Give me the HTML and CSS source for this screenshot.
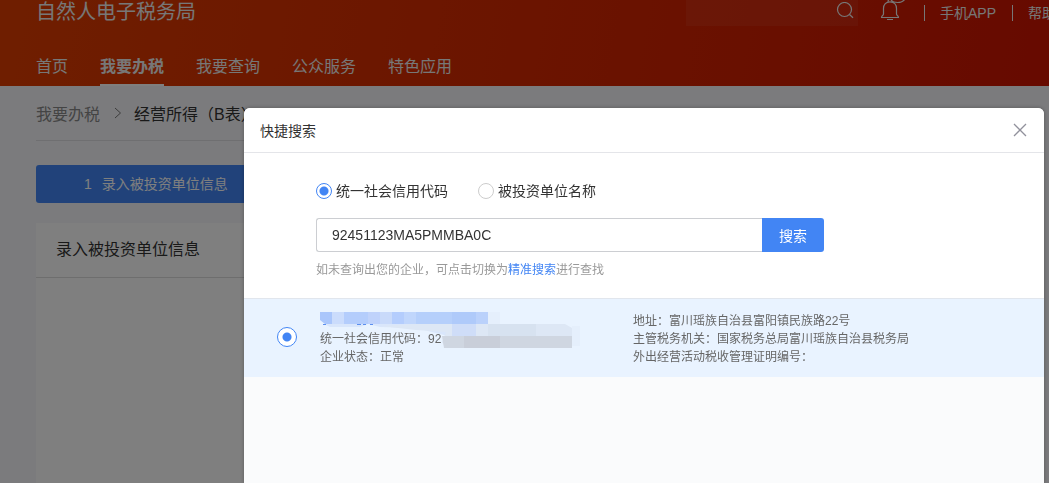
FILE: index.html
```html
<!DOCTYPE html>
<html lang="zh-CN">
<head>
<meta charset="utf-8">
<title>自然人电子税务局</title>
<link rel="stylesheet" href="styles.css">
</head>
<body>
<div class="page">
  <header class="header">
    <div class="topbar">
      <h1 class="brand">自然人电子税务局</h1>
      <div class="tools">
        <div class="site-search">
          <button class="icon-button" type="button" aria-label="搜索">
            <svg width="18" height="18" viewBox="0 0 18 18" fill="none" stroke="currentColor" stroke-width="1.2"><circle cx="8.500" cy="7.500" r="7"/><path d="M13.500 12.500L17 15.800"/></svg>
          </button>
        </div>
        <button class="icon-button bell" type="button" aria-label="消息">
          <svg width="26" height="22" viewBox="0 0 26 22" fill="none" stroke="currentColor" stroke-width="1.200"><path d="M1 17.500H19M3.500 14V8.500C3.500 4.500 6 1.800 10 1.800S16.500 4.500 16.500 8.500V14C16.500 15.500 18.500 15.500 18.500 17.500M3.500 14C3.500 15.500 1.500 15.500 1.500 17.500M7 19.500H13M8 1.500C8 .5 8.500 0 9 -.5M11 0C13 3 22 4 25 -1"/></svg>
        </button>
        <a class="tool-link" href="#">手机APP</a>
        <a class="tool-link" href="#">帮助</a>
      </div>
    </div>
    <nav class="nav">
      <a class="nav-item" href="#">首页</a>
      <a class="nav-item nav-active" href="#">我要办税</a>
      <a class="nav-item" href="#">我要查询</a>
      <a class="nav-item" href="#">公众服务</a>
      <a class="nav-item" href="#">特色应用</a>
    </nav>
  </header>
  <main class="content">
    <div class="crumbs">
      <a class="crumb-link" href="#">我要办税</a>
      <svg width="8" height="12" viewBox="0 0 8 12" fill="none" stroke="currentColor"><path d="M1 1L6.500 6L1 11"/></svg>
      <span class="crumb-current">经营所得（B表）</span>
    </div>
    <div class="steps"><span>1</span><span>录入被投资单位信息</span></div>
    <section class="panel">
      <h2 class="panel-title">录入被投资单位信息</h2>
    </section>
  </main>
</div>
<div class="overlay">
  <section class="dialog" role="dialog" aria-labelledby="dialog-title">
    <div class="dialog-head">
      <h2 class="dialog-title" id="dialog-title">快捷搜索</h2>
      <button class="icon-button close" type="button" aria-label="关闭">
        <svg width="14" height="14" viewBox="0 0 14 14" fill="none" stroke="currentColor" stroke-width="1.300"><path d="M1 1L13 13M13 1L1 13"/></svg>
      </button>
    </div>
    <form class="search-form">
      <div class="options">
        <label class="option"><input class="radio" type="radio" name="kind" checked>统一社会信用代码</label>
        <label class="option"><input class="radio" type="radio" name="kind">被投资单位名称</label>
      </div>
      <div class="search-row">
        <input class="search-input" type="text" aria-label="统一社会信用代码" value="92451123MA5PMMBA0C">
        <button class="search-button" type="button">搜索</button>
      </div>
      <p class="hint">如未查询出您的企业，可点击切换为<a class="hint-link" href="#">精准搜索</a>进行查找</p>
    </form>
    <label class="result">
      <input class="radio result-radio" type="radio" name="company" checked>
      <span class="result-main">
        <svg class="mosaic" width="260" height="42" viewBox="0 0 260 42">
          <path fill="#d9e6fb" d="M4 12H168V24H128L96 16L60 15L48 12L40 15H10Z"/>
          <path fill="#dde7f5" d="M60 14L96 12H245L252 16V36H126L122 30L126 20L96 18Z"/>
          <path fill="#aac6fb" d="M0 0H12V12H5L0 8Z"/><path fill="#cbdcfc" d="M12 0H24V12H12Z"/>
          <path fill="#b4cdfc" d="M24 0H48V12H24Z"/><path fill="#bfd2fb" d="M48 0H60V12H48Z"/>
          <path fill="#c9dafa" d="M60 0H72V12H60Z"/><path fill="#b4cdfd" d="M72 0H84V12H72Z"/>
          <path fill="#c0d6fc" d="M84 0H96V12H84Z"/><path fill="#b5cffb" d="M96 0H132V12H96Z"/>
          <path fill="#afcafa" d="M132 0H156V12H132Z"/><path fill="#bad1fb" d="M156 0H168V12H156Z"/>
          <path fill="#e5effc" d="M168 0H180V12H168ZM252 14H260V34H252Z"/>
          <path fill="#cfddf8" d="M132 12H156V24H132Z"/><path fill="#d7e2f0" d="M168 12H216V24H168Z"/>
          <path fill="#cfd6e1" d="M122 24H252V36H124Z"/><path fill="#c9ced9" d="M144 24H180V36H144Z"/>
          <path fill="#5b8ff0" d="M3 12H6V13H3ZM37 12H41V13H37ZM43 12H46V13H43ZM50 12H53V13H50Z"/>
        </svg>
        <span class="line">统一社会信用代码：92</span>
        <span class="line">企业状态：正常</span>
      </span>
      <span class="result-side">
        <span class="line">地址：富川瑶族自治县富阳镇民族路22号</span>
        <span class="line">主管税务机关：国家税务总局富川瑶族自治县税务局</span>
        <span class="line">外出经营活动税收管理证明编号：</span>
      </span>
    </label>
  </section>
</div>
</body>
</html>
```
FILE: styles.css
```css
* { box-sizing: border-box; }
body {
  margin: 0;
  font-family: "Liberation Sans", "Noto Sans CJK SC", sans-serif;
  font-size: 14px;
  color: #333;
  background: #f7f7fa;
}
h1, h2, p { margin: 0; font-weight: 400; }
a { color: inherit; text-decoration: none; }
button, input { font: inherit; margin: 0; }
.page { height: 100vh; overflow: hidden; display: flex; flex-direction: column; }
.header {
  flex: none;
  color: #fff;
  background: linear-gradient(100deg, #df3d00, #ce1400);
}
.topbar {
  height: 46px;
  padding-left: 36px;
  display: flex;
  justify-content: space-between;
  align-items: flex-start;
  overflow: hidden;
}
.brand { font-size: 20px; line-height: 24px; color: #eee; }
.tools { display: flex; width: 363px; flex: none; white-space: nowrap; color: #eee; }
.site-search {
  width: 172px;
  height: 26px;
  flex: none;
  padding: 2px 4px;
  display: flex;
  justify-content: flex-end;
  align-items: flex-start;
  background: rgba(255, 255, 255, 0.06);
}
.icon-button { display: flex; padding: 0; border: 0; background: none; color: inherit; }
.bell { width: 66px; flex: none; padding-left: 22px; }
.tool-link { line-height: 20px; padding-right: 16px; display: flex; align-items: center; }
.tool-link::before { content: ""; width: 1px; height: 16px; margin-right: 15px; background: currentColor; }
.nav { display: flex; gap: 32px; padding-left: 36px; font-size: 16px; color: #eee; }
.nav-item { padding-top: 2px; line-height: 38px; }
.nav-active { font-weight: 700; box-shadow: inset 0 -2px #fff; }
.content { flex: 1; padding: 0 36px; display: flex; flex-direction: column; }
.crumbs {
  height: 55px;
  display: flex;
  align-items: center;
  gap: 12px;
  font-size: 16px;
  color: #777;
  border-bottom: 1px solid #dedee2;
}
.crumb-link { color: #888; padding-right: 2px; }
.crumb-current { color: #333; }
.steps {
  margin: 24px 0 20px;
  padding-left: 48px;
  display: flex;
  gap: 10px;
  line-height: 38px;
  color: #fff;
  background: #4285f4;
  border-radius: 3px;
}
.panel { flex: 1; background: #fff; }
.panel-title { padding: 0 20px; font-size: 16px; line-height: 54px; border-bottom: 1px solid #ddd; }
.overlay {
  position: fixed;
  inset: 0;
  padding: 108px 5px 0 244px;
  display: flex;
  background: rgba(0, 0, 0, 0.5);
}
.dialog {
  flex: 1;
  overflow: hidden;
  background: #fafbfc;
  border-radius: 6px 6px 0 0;
  box-shadow: 0 0 4px rgba(0, 0, 0, 0.3);
}
.dialog-head {
  height: 45px;
  padding: 0 17px 0 16px;
  display: flex;
  justify-content: space-between;
  align-items: center;
  background: #fff;
  border-bottom: 1px solid #e4e5e9;
}
.dialog-title { font-size: 14px; }
.close { color: #91919c; }
.search-form { height: 145px; padding: 28px 72px 0; background: #fff; }
.options { display: flex; gap: 30px; line-height: 20px; }
.option { display: flex; align-items: center; gap: 4px; }
.radio {
  appearance: none;
  flex: none;
  width: 16px;
  height: 16px;
  border: 1px solid #ccc;
  border-radius: 50%;
  background: #fff;
}
.radio:checked {
  border-color: #4285f4;
  background: radial-gradient(circle, #4285f4 4px, #fff 5px);
}
.search-row { display: flex; max-width: 508px; height: 34px; margin-top: 17px; }
.search-input {
  flex: 1;
  min-width: 0;
  padding: 0 15px;
  color: #333;
  background: #fff;
  border: 1px solid #ccced2;
  border-right: 0;
  border-radius: 3px 0 0 3px;
}
.search-button { width: 62px; padding: 0; border: 0; border-radius: 0 3px 3px 0; color: #fff; background: #4285f4; }
.hint { margin-top: 8px; font-size: 12px; line-height: 20px; color: #999; }
.hint-link { color: #4285f4; }
.result {
  height: 79px;
  padding: 13px 33px;
  display: flex;
  font-size: 12px;
  line-height: 18px;
  color: #666;
  background: #e9f3ff;
  border-top: 1px solid #e1e6ed;
}
.result-radio { width: 20px; height: 20px; margin: 15px 23px 0 0; }
.result-main { position: relative; width: 313px; flex: none; padding-top: 18px; }
.line { display: block; }
.mosaic { position: absolute; left: 0; top: 0; }
```
